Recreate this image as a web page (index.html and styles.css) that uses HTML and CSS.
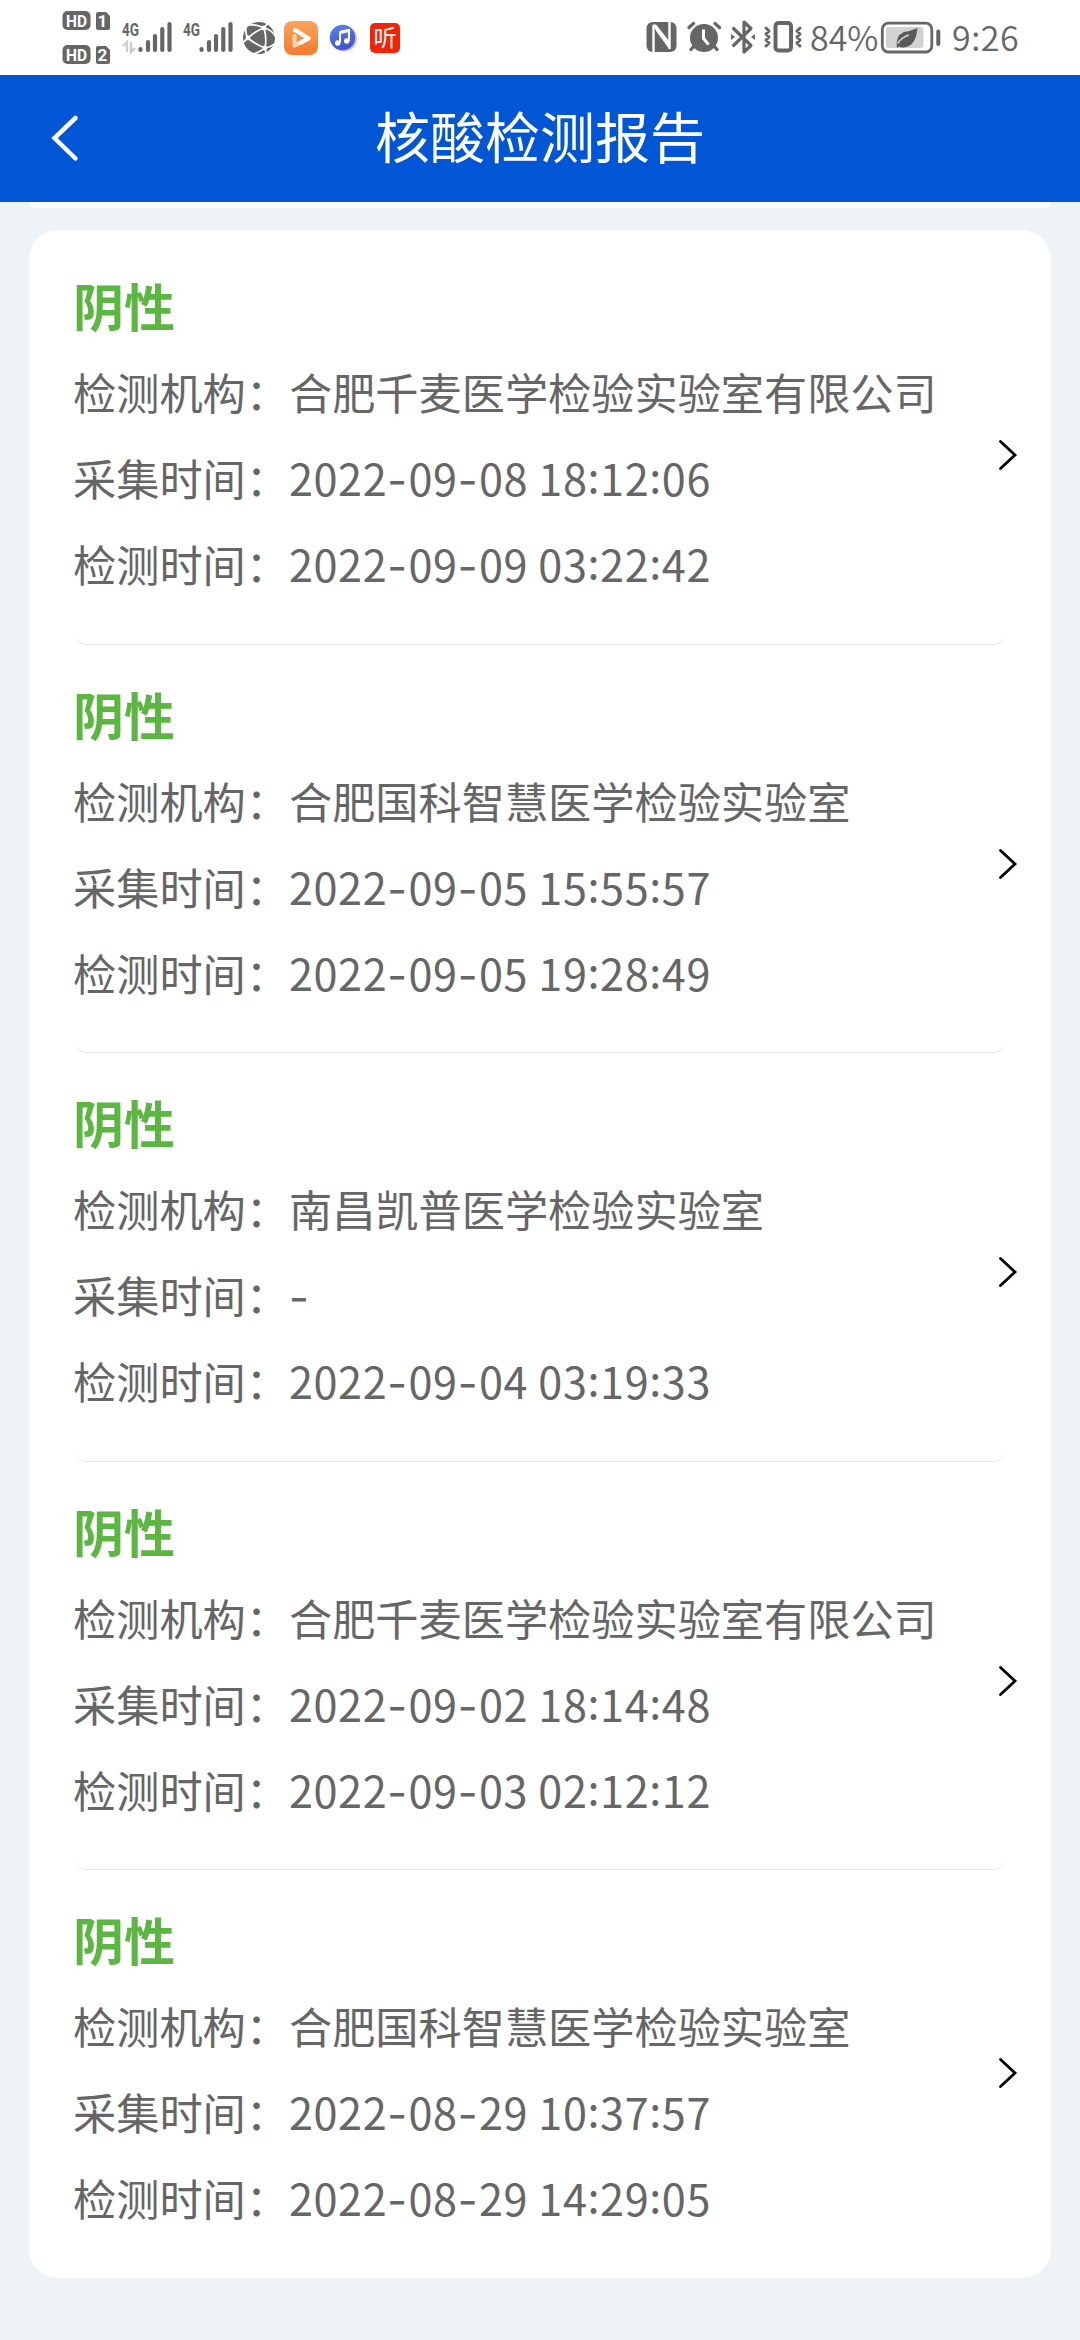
FILE: index.html
```html
<!DOCTYPE html>
<html lang="zh-CN">
<head>
  <meta charset="UTF-8">
  <title>核酸检测报告</title>
  <link rel="stylesheet" href="styles.css">
</head>
<body>
  <div class="status-bar">
    <div class="status-left">
      <!-- HD 1 / HD 2 -->
      <svg width="54" height="75" viewBox="60 0 54 75">
        <g fill="#666">
          <rect x="62.500" y="11" width="28" height="19" rx="5"/>
          <path d="M98 12h8l4 4v12q0 2-2 2h-10q-2 0-2-2v-14q0-2 2-2z"/>
          <rect x="62.500" y="45" width="28" height="19" rx="5"/>
          <path d="M98 46h8l4 4v12q0 2-2 2h-10q-2 0-2-2v-14q0-2 2-2z"/>
        </g>
        <g class="badge-text">
          <text x="76.500" y="26.500" textLength="21" lengthAdjust="spacingAndGlyphs">HD</text>
          <text x="102.500" y="26.500">1</text>
          <text x="76.500" y="60.500" textLength="21" lengthAdjust="spacingAndGlyphs">HD</text>
          <text x="102.500" y="60.500">2</text>
        </g>
      </svg>
      <!-- signal 1 -->
      <svg width="61" height="75" viewBox="114 0 61 75">
        <text class="net" x="122" y="35.500" textLength="17" lengthAdjust="spacingAndGlyphs">4G</text>
        <path d="M123 46l4-4v10M131 42v10l4-4" fill="none" stroke="#ccc" stroke-width="2.400"/>
        <g stroke="#666" stroke-width="4.200" stroke-linecap="round">
          <path d="M140.500 49v1M148 42v8M155 36v14M162.300 29v21M169.500 24v26"/>
        </g>
      </svg>
      <!-- signal 2 -->
      <svg width="61" height="75" viewBox="175 0 61 75">
        <text class="net" x="183" y="35.500" textLength="17" lengthAdjust="spacingAndGlyphs">4G</text>
        <g stroke="#666" stroke-width="4.200" stroke-linecap="round">
          <path d="M201.500 49v1M209 42v8M216 36v14M223.300 29v21M230.500 24v26"/>
        </g>
      </svg>
      <!-- globe -->
      <svg width="44" height="75" viewBox="236 0 44 75">
        <circle cx="259" cy="38" r="16" fill="#666"/>
        <g fill="none" stroke="#fff" stroke-width="1.700">
          <path d="M264 28Q255 31 248 38Q256 45 265 48Q267 38 264 28z"/>
          <path d="M264 28Q256 24 249 25M264 28L268 23M264 28Q272 30 276 37M248 38Q245 34 246 28M248 38Q244 41 243 43M265 48Q258 53 253 54M265 48Q271 47 274 44M265 48L266 53"/>
        </g>
        <g fill="#fff"><circle cx="264" cy="28" r="2.400"/><circle cx="248" cy="38" r="2.400"/><circle cx="265" cy="48" r="2.400"/></g>
      </svg>
      <!-- video -->
      <svg width="44" height="75" viewBox="280 0 44 75">
        <defs>
          <linearGradient id="orange" x1="0" y1="0" x2="0" y2="1">
            <stop offset="0" stop-color="#fba45c"/><stop offset="1" stop-color="#f47a30"/>
          </linearGradient>
        </defs>
        <rect x="284" y="21" width="34" height="34" rx="8" fill="url(#orange)"/>
        <path d="M294.500 36v9.500L308.500 38.500" fill="none" stroke="#fbd3b5" stroke-width="4.200" stroke-linecap="round" stroke-linejoin="round"/>
        <path d="M295 30L308.500 38.200L301 42.500" fill="none" stroke="#fff" stroke-width="4.200" stroke-linecap="round" stroke-linejoin="round"/>
      </svg>
      <!-- music -->
      <svg width="40" height="75" viewBox="324 0 40 75">
        <defs>
          <linearGradient id="music" x1="0" y1="0" x2="0.300" y2="1">
            <stop offset="0" stop-color="#5a86e6"/><stop offset="1" stop-color="#3f55cf"/>
          </linearGradient>
        </defs>
        <circle cx="344" cy="38.500" r="13" fill="#d9b5f5"/>
        <circle cx="342.500" cy="37.500" r="12.700" fill="url(#music)"/>
        <path d="M340 43v-11l9-2v11" fill="none" stroke="#fff" stroke-width="2"/>
        <path d="M340 32.500l9-2" stroke="#fff" stroke-width="3"/>
        <circle cx="337.700" cy="43" r="2.700" fill="#fff"/><circle cx="346.700" cy="41" r="2.700" fill="#fff"/>
      </svg>
      <!-- radio -->
      <svg width="40" height="75" viewBox="364 0 40 75">
        <rect x="370" y="23" width="30" height="30" rx="5" fill="#f02508"/>
        <text class="radio" x="385" y="46">听</text>
      </svg>
    </div>
    <div class="status-right">
      <!-- nfc -->
      <svg width="42" height="75" viewBox="641 0 42 75">
        <rect x="646.500" y="22" width="30" height="30" rx="6" fill="#666"/>
        <path d="M653.500 53V25M669.500 49V21" fill="none" stroke="#fff" stroke-width="2.400"/>
        <path d="M653 24.500h3l13.500 17v8l-13-18z" fill="#fff"/>
      </svg>
      <!-- alarm -->
      <svg width="42" height="75" viewBox="683 0 42 75">
        <circle cx="704" cy="38" r="14" fill="#666"/>
        <g fill="none" stroke="#666" stroke-width="3.400" stroke-linecap="round">
          <path d="M689 27.500l4.500-4M715 23.500l4.500 4M694 46l-3 3.500M714 46l3 3.500"/>
        </g>
        <path d="M703.500 29.500v9l5 6" fill="none" stroke="#fff" stroke-width="3"/>
      </svg>
      <!-- bluetooth -->
      <svg width="36" height="75" viewBox="725 0 36 75">
        <path d="M733.500 28.500l17.500 17-7 6.500V22l7 6.500-17.500 17" fill="none" stroke="#666" stroke-width="3.200" stroke-linecap="round" stroke-linejoin="round"/>
        <path d="M731 34v6l4-3zM755 34v6l-4-3z" fill="#666"/>
      </svg>
      <!-- vibrate -->
      <svg width="46" height="75" viewBox="761 0 46 75">
        <rect x="775.500" y="23" width="15.500" height="27.500" rx="3" fill="none" stroke="#666" stroke-width="4"/>
        <path d="M766 28l3 3-3 3 3 3-3 3 3 3-3 3M800 28l-3 3 3 3-3 3 3 3-3 3 3 3" fill="none" stroke="#666" stroke-width="3" stroke-linecap="round" stroke-linejoin="round"/>
      </svg>
      <span class="percent">84%</span>
      <!-- battery -->
      <svg width="66" height="75" viewBox="879 0 66 75">
        <rect x="882.300" y="23.200" width="49.500" height="28.800" rx="6" fill="none" stroke="#666" stroke-width="2.800"/>
        <rect x="886" y="27" width="37.500" height="21" rx="3" fill="#d2d2d2"/>
        <rect x="936.300" y="29.500" width="4" height="16.500" rx="2" fill="#666"/>
        <path d="M917.500 28Q916 46 904 47.500q-3 .3-5-1l-2 1.500Q895 36 904 32q7-1 13.500-4z" fill="#5a5a5a"/>
        <path d="M897.500 43.500Q902 37 909 35" fill="none" stroke="#d2d2d2" stroke-width="1.500"/>
      </svg>
      <span class="clock">9:26</span>
    </div>
  </div>

  <div class="header">
    <svg class="back" width="30" height="50" viewBox="0 0 30 50">
      <path d="M26.500 4L5.500 24L26.500 44.500" fill="none" stroke="#fff" stroke-width="4.500" stroke-linecap="round"/>
    </svg>
    <h1>核酸检测报告</h1>
  </div>

  <div class="content">
    <div class="prev-card"></div>
    <div class="card">
      <div class="item">
        <div class="info">
          <h2>阴性</h2>
          <p>检测机构：<span>合肥千麦医学检验实验室有限公司</span></p>
          <p>采集时间：<span class="num">2022<i>-</i>09<i>-</i>08 18<b>:</b>12<b>:</b>06</span></p>
          <p>检测时间：<span class="num">2022<i>-</i>09<i>-</i>09 03<b>:</b>22<b>:</b>42</span></p>
        </div>
        <svg class="arrow" width="20" height="32" viewBox="0 0 20 32"><path d="M2.500 2.500L17 16L2.500 29.500"/></svg>
      </div>
      <div class="item">
        <div class="info">
          <h2>阴性</h2>
          <p>检测机构：<span>合肥国科智慧医学检验实验室</span></p>
          <p>采集时间：<span class="num">2022<i>-</i>09<i>-</i>05 15<b>:</b>55<b>:</b>57</span></p>
          <p>检测时间：<span class="num">2022<i>-</i>09<i>-</i>05 19<b>:</b>28<b>:</b>49</span></p>
        </div>
        <svg class="arrow" width="20" height="32" viewBox="0 0 20 32"><path d="M2.500 2.500L17 16L2.500 29.500"/></svg>
      </div>
      <div class="item">
        <div class="info">
          <h2>阴性</h2>
          <p>检测机构：<span>南昌凯普医学检验实验室</span></p>
          <p>采集时间：<span class="num"><i>-</i></span></p>
          <p>检测时间：<span class="num">2022<i>-</i>09<i>-</i>04 03<b>:</b>19<b>:</b>33</span></p>
        </div>
        <svg class="arrow" width="20" height="32" viewBox="0 0 20 32"><path d="M2.500 2.500L17 16L2.500 29.500"/></svg>
      </div>
      <div class="item">
        <div class="info">
          <h2>阴性</h2>
          <p>检测机构：<span>合肥千麦医学检验实验室有限公司</span></p>
          <p>采集时间：<span class="num">2022<i>-</i>09<i>-</i>02 18<b>:</b>14<b>:</b>48</span></p>
          <p>检测时间：<span class="num">2022<i>-</i>09<i>-</i>03 02<b>:</b>12<b>:</b>12</span></p>
        </div>
        <svg class="arrow" width="20" height="32" viewBox="0 0 20 32"><path d="M2.500 2.500L17 16L2.500 29.500"/></svg>
      </div>
      <div class="item">
        <div class="info">
          <h2>阴性</h2>
          <p>检测机构：<span>合肥国科智慧医学检验实验室</span></p>
          <p>采集时间：<span class="num">2022<i>-</i>08<i>-</i>29 10<b>:</b>37<b>:</b>57</span></p>
          <p>检测时间：<span class="num">2022<i>-</i>08<i>-</i>29 14<b>:</b>29<b>:</b>05</span></p>
        </div>
        <svg class="arrow" width="20" height="32" viewBox="0 0 20 32"><path d="M2.500 2.500L17 16L2.500 29.500"/></svg>
      </div>
    </div>
  </div>
</body>
</html>
```
FILE: styles.css
```css
* {
  box-sizing: border-box;
  margin: 0;
  padding: 0;
}

body {
  background-color: #eef3f7;
  font-family: "Noto Sans CJK SC", sans-serif;
  color: #666;
}

svg {
  display: block;
  flex: none;
}

/* Status bar */
.status-bar {
  height: 75px;
  background: #fff;
  display: flex;
  justify-content: space-between;
  padding: 0 60px;
}

.status-left,
.status-right {
  display: flex;
}

.status-right {
  width: 379px;
}

.badge-text {
  font: bold 17px "Roboto", sans-serif;
  fill: #fff;
  text-anchor: middle;
}

.net {
  font: bold 19px "Roboto", sans-serif;
  fill: #666;
}

.radio {
  font-size: 23px;
  fill: #fff;
  text-anchor: middle;
}

.percent,
.clock {
  font-size: 34px;
  line-height: 73px;
  font-weight: 350;
  white-space: nowrap;
}

.percent {
  width: 72px;
  padding-left: 3px;
}

.clock {
  padding-left: 7px;
  letter-spacing: 0.5px;
}

/* Blue title bar */
.header {
  height: 127px;
  background: #0056d4;
  display: grid;
  grid-template-columns: 110px 1fr 110px;
  align-items: center;
}

.back {
  margin-left: 49px;
}

.header h1 {
  padding-bottom: 9px;
  font-size: 55px;
  font-weight: 400;
  line-height: 80px;
  color: #fff;
  text-align: center;
}

/* Report list */
.content {
  padding: 0 29px;
}

.prev-card {
  height: 6px;
  margin-bottom: 22px;
  background: #fff;
  border-radius: 0 0 12px 12px;
}

.card {
  height: 2048px;
  padding: 6px 44px 0;
  background: #fff;
  border-radius: 29px;
}

.item {
  height: 408.5px;
  display: flex;
  justify-content: space-between;
  border-bottom: 1px solid #e6e6e6;
  border-radius: 14px;
}

.item:last-child {
  border-bottom: none;
}

.info {
  padding-top: 26px;
}

.info h2 {
  font-size: 51px;
  line-height: 86px;
  font-weight: 700;
  color: #5cb642;
}

.info p {
  height: 86px;
  font-size: 43.2px;
  line-height: 86px;
  white-space: nowrap;
}

.num {
  letter-spacing: 0.6px;
}

.num i {
  font-family: "Inter", sans-serif;
  font-style: normal;
  line-height: 1;
  letter-spacing: 1.4px;
}

.num b {
  font-weight: 400;
  vertical-align: 3px;
  line-height: 1;
}

.arrow {
  margin-top: 203px;
  margin-right: -11px;
}

.arrow path {
  fill: none;
  stroke: #000;
  stroke-width: 2.8px;
  stroke-linecap: round;
}

.item:last-child .arrow {
  margin-top: 187px;
}
```
